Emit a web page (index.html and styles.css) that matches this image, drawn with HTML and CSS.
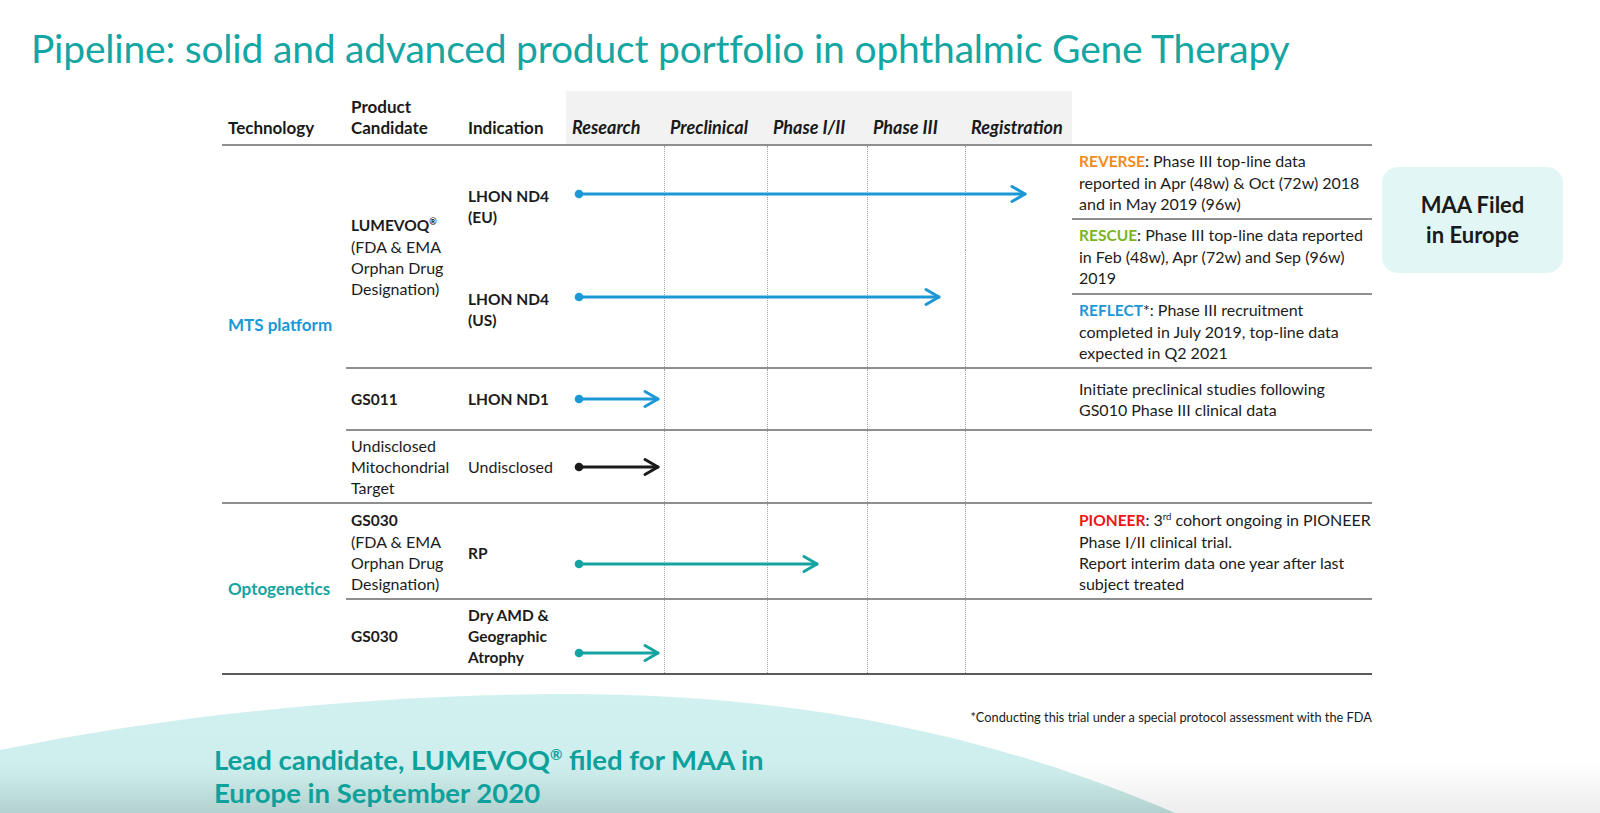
FILE: index.html
```html
<!DOCTYPE html>
<html lang="en">
<head>
<meta charset="utf-8">
<title>Pipeline</title>
<link rel="stylesheet" href="styles.css">
</head>
<body>
<div class="slide">
  <h1 class="title">Pipeline: solid and advanced product portfolio in ophthalmic Gene Therapy</h1>

  <div class="main">
    <div class="pipe-wrap">
      <div class="pipeline">
        <!-- header -->
        <div class="hd c-tech">Technology</div>
        <div class="hd c-prod">Product<br>Candidate</div>
        <div class="hd c-ind">Indication</div>
        <div class="hd hd-phases">
          <span>Research</span><span>Preclinical</span><span>Phase I/II</span><span>Phase III</span><span>Registration</span>
        </div>
        <div class="hd c-notes"></div>

        <!-- MTS platform -->
        <div class="cell c-tech r-mts tech-label mts">MTS platform</div>

        <div class="cell c-prod r-a line">
          <div><b>LUMEVOQ<sup class="reg">®</sup></b><br>(FDA &amp; EMA<br>Orphan Drug<br>Designation)</div>
        </div>

        <div class="cell c-ind r-a1 top pt-40"><b>LHON ND4<br>(EU)</b></div>
        <div class="cell c-ind r-a2 top pt-39 line"><b>LHON ND4<br>(US)</b></div>

        <div class="track r-a1">
          <i></i><i></i><i></i><i></i><i></i>
          <svg class="arr blue mt-39" style="width:454px" viewBox="0 0 454 18"><circle cx="5" cy="9" r="4.3"/><line x1="5" y1="9" x2="451" y2="9"/><polyline points="438,1.5 451,9 438,16.5"/></svg>
        </div>
        <div class="track r-a2 line">
          <i></i><i></i><i></i><i></i><i></i>
          <svg class="arr blue mt-38" style="width:368px" viewBox="0 0 368 18"><circle cx="5" cy="9" r="4.3"/><line x1="5" y1="9" x2="365" y2="9"/><polyline points="352,1.5 365,9 352,16.5"/></svg>
        </div>

        <div class="notes c-notes r-a line">
          <div class="note"><p><b class="k-reverse">REVERSE</b>: Phase III top-line data reported in Apr (48w) &amp; Oct (72w) 2018 and in May 2019 (96w)</p></div>
          <div class="note"><p><b class="k-rescue">RESCUE</b>: Phase III top-line data reported in Feb (48w), Apr (72w) and Sep (96w) 2019</p></div>
          <div class="note"><p><b class="k-reflect">REFLECT</b>*: Phase III recruitment completed in July 2019, top-line data expected in Q2 2021</p></div>
        </div>

        <!-- GS011 -->
        <div class="cell c-prod r-b line"><b>GS011</b></div>
        <div class="cell c-ind r-b line"><b>LHON ND1</b></div>
        <div class="track r-b line">
          <i></i><i></i><i></i><i></i><i></i>
          <svg class="arr blue mid" style="width:87px" viewBox="0 0 87 18"><circle cx="5" cy="9" r="4.3"/><line x1="5" y1="9" x2="84" y2="9"/><polyline points="71,1.5 84,9 71,16.5"/></svg>
        </div>
        <div class="cell c-notes r-b line note-text"><p>Initiate preclinical studies following GS010 Phase III clinical data</p></div>

        <!-- Undisclosed -->
        <div class="cell c-prod r-c line">Undisclosed<br>Mitochondrial<br>Target</div>
        <div class="cell c-ind r-c line">Undisclosed</div>
        <div class="track r-c line">
          <i></i><i></i><i></i><i></i><i></i>
          <svg class="arr black mid" style="width:87px" viewBox="0 0 87 18"><circle cx="5" cy="9" r="4.3"/><line x1="5" y1="9" x2="84" y2="9"/><polyline points="71,1.5 84,9 71,16.5"/></svg>
        </div>
        <div class="cell c-notes r-c line"></div>

        <!-- Optogenetics -->
        <div class="cell c-tech r-opto tech-label opto line-dark">Optogenetics</div>

        <div class="cell c-prod r-d line"><div><b>GS030</b><br>(FDA &amp; EMA<br>Orphan Drug<br>Designation)</div></div>
        <div class="cell c-ind r-d top pt-39 line"><b>RP</b></div>
        <div class="track r-d line">
          <i></i><i></i><i></i><i></i><i></i>
          <svg class="arr teal mt-51" style="width:246px" viewBox="0 0 246 18"><circle cx="5" cy="9" r="4.3"/><line x1="5" y1="9" x2="243" y2="9"/><polyline points="230,1.5 243,9 230,16.5"/></svg>
        </div>
        <div class="cell c-notes r-d line note-text"><p><b class="k-pioneer">PIONEER</b>: 3<sup class="sup">rd</sup> cohort ongoing in PIONEER Phase I/II clinical trial.<br>Report interim data one year after last subject treated</p></div>

        <div class="cell c-prod r-e line-dark"><b>GS030</b></div>
        <div class="cell c-ind r-e line-dark"><b>Dry AMD &amp;<br>Geographic<br>Atrophy</b></div>
        <div class="track r-e line-dark">
          <i></i><i></i><i></i><i></i><i></i>
          <svg class="arr teal mt-44" style="width:87px" viewBox="0 0 87 18"><circle cx="5" cy="9" r="4.3"/><line x1="5" y1="9" x2="84" y2="9"/><polyline points="71,1.5 84,9 71,16.5"/></svg>
        </div>
        <div class="cell c-notes r-e line-dark"></div>
      </div>

      <p class="footnote">*Conducting this trial under a special protocol assessment with the FDA</p>
    </div>

    <div class="maa">MAA Filed<br>in Europe</div>
  </div>

  <div class="bottom">
    <svg class="wave" viewBox="0 0 1600 130" preserveAspectRatio="none" aria-hidden="true">
      <defs>
        <linearGradient id="wg" x1="0" y1="0" x2="0" y2="1">
          <stop offset="0" stop-color="#d0f1ef"/>
          <stop offset="0.7" stop-color="#cdeeec"/>
          <stop offset="1" stop-color="#bfe0de"/>
        </linearGradient>
      </defs>
      <path d="M0,67 C180,30 380,12 560,11 C790,10 990,50 1175,130 L0,130 Z" fill="url(#wg)"/>
    </svg>
    <div class="shade"></div>
    <p class="lead">Lead candidate, LUMEVOQ<sup class="reg">®</sup> filed for MAA in<br>Europe in September 2020</p>
  </div>
</div>
</body>
</html>
```

FILE: styles.css
```css
* { box-sizing: border-box; }

html, body {
  margin: 0;
  padding: 0;
  background: #ffffff;
}

body {
  font-family: "Lato", "Noto Sans", sans-serif;
  color: #1c1c1c;
}

.slide {
  position: relative;
  width: 1600px;
  height: 813px;
  overflow: hidden;
  background: #ffffff;
}

.title {
  margin: 0;
  height: 91px;
  padding: 24px 0 0 31px;
  font-size: 39px;
  line-height: 48px;
  font-weight: 400;
  color: #14a6a2;
  letter-spacing: -0.2px;
}

.main {
  display: flex;
  align-items: flex-start;
  padding-left: 222px;
}

.pipe-wrap {
  display: flex;
  flex-direction: column;
  width: 1150px;
}

.pipeline {
  display: grid;
  grid-template-columns: 124px 116px 104px 506px 300px;
  grid-template-rows: 55px 104px 119px 62px 73px 96px 75px;
  font-size: 16px;
  line-height: 21px;
}

/* column placement */
.c-tech  { grid-column: 1; }
.c-prod  { grid-column: 2; }
.c-ind   { grid-column: 3; }
.track, .hd-phases { grid-column: 4; }
.c-notes { grid-column: 5; }

/* row placement */
.r-a1 { grid-row: 2; }
.r-a2 { grid-row: 3; }
.r-a  { grid-row: 2 / 4; }
.r-b  { grid-row: 4; }
.r-c  { grid-row: 5; }
.r-d  { grid-row: 6; }
.r-e  { grid-row: 7; }
.r-mts  { grid-row: 2 / 6; }
.r-opto { grid-row: 6 / 8; }

b { font-size: 15.5px; }

/* header */
.hd {
  grid-row: 1;
  display: flex;
  align-items: flex-end;
  padding: 0 0 6px 6px;
  font-weight: 700;
  font-size: 17px;
  line-height: 21px;
  border-bottom: 2px solid #8f8f8f;
  color: #1a1a1a;
}
.hd.c-prod { padding-left: 5px; }
.hd-phases {
  display: grid;
  grid-template-columns: 98px 103px 100px 98px 107px;
  background: #f2f2f2;
  padding: 0 0 6px 0;
  font-style: italic;
  font-size: 18px;
}
.hd-phases span { padding-left: 6px; }

/* body cells */
.cell {
  display: flex;
  align-items: center;
  padding-left: 6px;
}
.cell.c-prod { padding-left: 5px; }
.cell.top { align-items: flex-start; }
.pt-40 { padding-top: 40px; }
.pt-39 { padding-top: 39px; }

.line      { border-bottom: 2px solid #8f8f8f; }
.line-dark { border-bottom: 2px solid #5a5a5a; }

.tech-label {
  font-weight: 700;
  font-size: 17px;
  padding-left: 6px;
}
.mts   { color: #1b98d5; border-bottom: 2px solid #8f8f8f; }
.opto  { color: #15a3a0; }

.reg {
  font-size: 9px;
  vertical-align: 6px;
  line-height: 0;
}
.sup {
  font-size: 9.5px;
  vertical-align: 6px;
  line-height: 0;
}

/* phase track with dotted lanes */
.track {
  display: grid;
  grid-template-columns: 98px 103px 100px 98px 107px;
  grid-template-rows: 100%;
}
.track i {
  grid-row: 1;
  border-left: 1px dotted #a6a6a6;
}
.track i:first-child { border-left: 0; }
.track i:nth-child(1) { grid-column: 1; }
.track i:nth-child(2) { grid-column: 2; }
.track i:nth-child(3) { grid-column: 3; }
.track i:nth-child(4) { grid-column: 4; }
.track i:nth-child(5) { grid-column: 5; }

.arr {
  grid-row: 1;
  grid-column: 1 / -1;
  height: 18px;
  margin-left: 8px;
  align-self: start;
  fill: none;
  stroke-width: 3;
  stroke-linecap: round;
  stroke-linejoin: round;
  overflow: visible;
}
.arr circle { stroke: none; }
.arr.blue  { stroke: #1b98d5; }
.arr.blue circle  { fill: #1b98d5; }
.arr.teal  { stroke: #14a3a0; }
.arr.teal circle  { fill: #14a3a0; }
.arr.black { stroke: #1a1a1a; }
.arr.black circle { fill: #1a1a1a; }
.arr.mid { align-self: center; }
.mt-39 { margin-top: 39px; }
.mt-38 { margin-top: 38px; }
.mt-51 { margin-top: 51px; }
.mt-44 { margin-top: 44px; }

/* notes */
.notes {
  display: flex;
  flex-direction: column;
}
.note {
  flex: 1;
  display: flex;
  align-items: center;
  padding-left: 7px;
  padding-right: 7px;
}
.note:not(:last-child) { border-bottom: 2px solid #8f8f8f; }
.note p, .note-text p {
  margin: 0;
}
.note-text { padding-left: 7px; }
.k-reverse { color: #f28b1e; }
.k-rescue  { color: #7ab51d; }
.k-reflect { color: #1b98d5; }
.k-pioneer { color: #f01414; }

.footnote {
  margin: 35px 0 0;
  text-align: right;
  font-size: 12.8px;
  line-height: 14px;
  color: #1a1a1a;
}

/* MAA box */
.maa {
  margin: 76px 0 0 10px;
  width: 181px;
  height: 106px;
  border-radius: 16px;
  background: #e3f6f6;
  display: flex;
  align-items: center;
  justify-content: center;
  text-align: center;
  font-weight: 700;
  font-size: 22px;
  line-height: 30px;
  color: #1a1a1a;
}

/* bottom band */
.bottom {
  position: absolute;
  left: 0;
  right: 0;
  bottom: 0;
  height: 130px;
}
.wave {
  position: absolute;
  left: 0;
  top: 0;
  width: 1600px;
  height: 130px;
}
.shade {
  position: absolute;
  left: 0;
  right: 0;
  bottom: 0;
  height: 50px;
  background: linear-gradient(to bottom, rgba(0,0,0,0), rgba(0,0,0,0.07));
}
.lead {
  position: relative;
  margin: 0;
  padding: 60px 0 0 214px;
  font-size: 27.5px;
  line-height: 33px;
  font-weight: 700;
  color: #0ea19c;
}
.lead .reg {
  font-size: 15px;
  vertical-align: 10px;
}
```
